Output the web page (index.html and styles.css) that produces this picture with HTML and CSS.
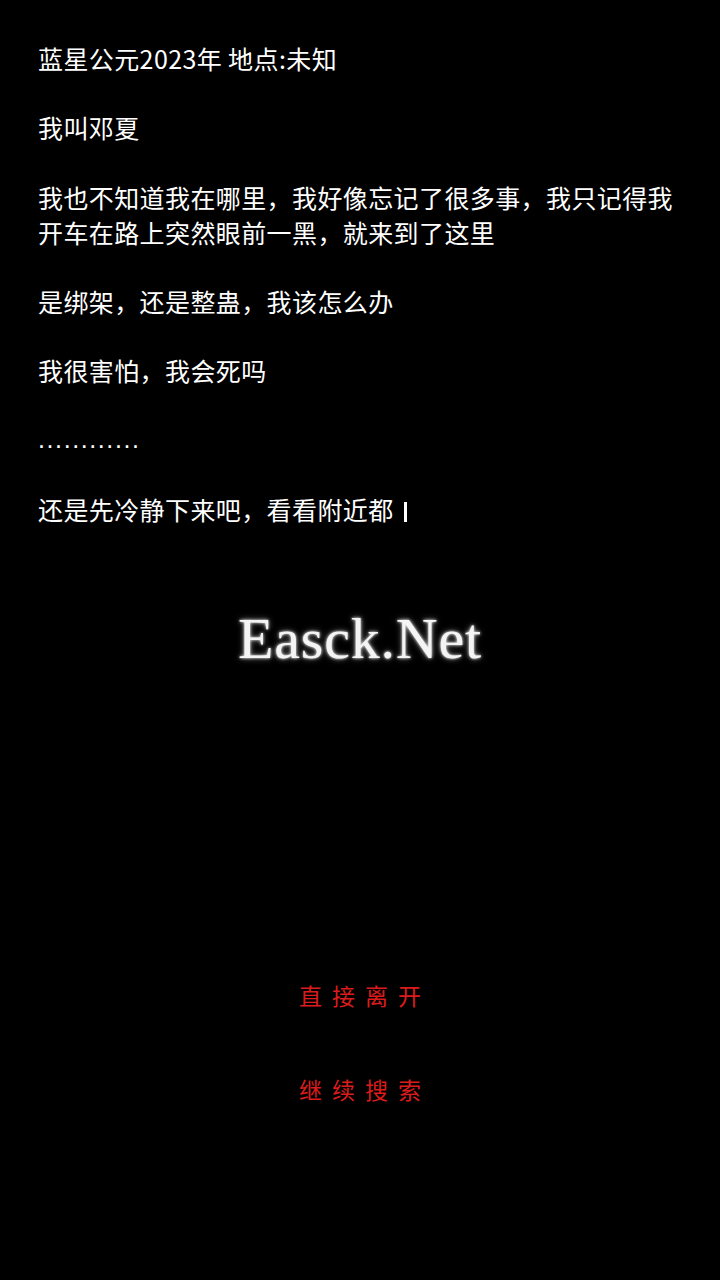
FILE: index.html
```html
<!DOCTYPE html>
<html lang="zh-CN">
<head>
<meta charset="utf-8">
<title>Story</title>
<link rel="stylesheet" href="styles.css">
</head>
<body>
<main class="screen">
  <section class="story">
    <p class="line">蓝星公元2023年 地点:未知</p>
    <p class="line">我叫邓夏</p>
    <p class="line">我也不知道我在哪里，我好像忘记了很多事，我只记得我开车在路上突然眼前一黑，就来到了这里</p>
    <p class="line">是绑架，还是整蛊，我该怎么办</p>
    <p class="line">我很害怕，我会死吗</p>
    <p class="line dots">............</p>
    <p class="line">还是先冷静下来吧，看看附近都<span class="cursor"></span></p>
  </section>
  <div class="watermark">Easck.Net</div>
  <nav class="choices">
    <div class="choice">直接离开</div>
    <div class="choice">继续搜索</div>
  </nav>
</main>
</body>
</html>
```

FILE: styles.css
```css
html, body {
  margin: 0;
  padding: 0;
  background: #000;
}
body {
  width: 720px;
  height: 1280px;
  overflow: hidden;
  font-family: "Noto Sans CJK SC", "Noto Sans", sans-serif;
  color: #fff;
}
.screen {
  display: flex;
  flex-direction: column;
}
.story {
  padding: 41px 38px 0 38px;
  display: flex;
  flex-direction: column;
  gap: 34.3px;
}
.line {
  margin: 0;
  font-size: 25px;
  line-height: 35px;
  letter-spacing: 0.4px;
}
.dots {
  font-size: 25px;
  letter-spacing: 1.6px;
  font-family: "Liberation Sans", sans-serif;
}
.cursor {
  display: inline-block;
  width: 3px;
  height: 20px;
  background: #fff;
  margin-left: 10px;
  vertical-align: -2px;
}
.watermark {
  margin-top: 82px;
  text-align: center;
  font-family: "Liberation Serif", serif;
  font-size: 58px;
  line-height: 60px;
  letter-spacing: 0.8px;
  color: #f4f4f4;
  text-shadow: 0 0 3px #fff, 0 0 6px rgba(255,255,255,0.55);
}
.choices {
  margin-top: 311px;
  display: flex;
  flex-direction: column;
  align-items: center;
  gap: 64px;
}
.choice {
  font-size: 23px;
  line-height: 30px;
  letter-spacing: 10px;
  padding-left: 10px;
  color: #dc1c1c;
}
```
